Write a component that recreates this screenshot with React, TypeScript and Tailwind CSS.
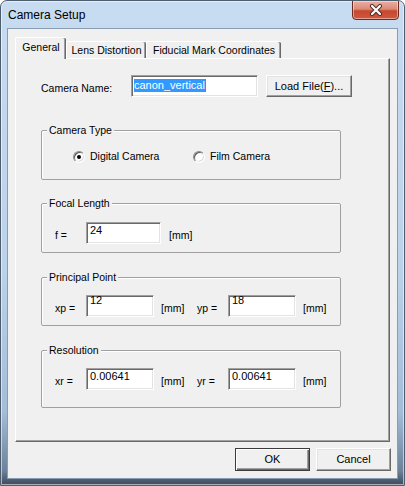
import { ReactNode } from "react";

const sans = "font-['Liberation_Sans',Arial,sans-serif]";

function Field({
  value,
  width,
  textTop = "pt-[1px] leading-[13px]",
}: {
  value: string;
  width: string;
  textTop?: string;
}) {
  return (
    <div
      className={`${width} h-[22px] bg-white border border-t-[#a0a0a0] border-l-[#a0a0a0] border-b-white border-r-white shadow-[inset_1px_1px_0_#696969,inset_-1px_-1px_0_#e3e3e3] pl-[2px] text-[11px] text-black ${textTop}`}
    >
      <div className="pl-[1px]">{value}</div>
    </div>
  );
}

function Label({ children, className = "" }: { children: ReactNode; className?: string }) {
  return <div className={`mt-[7px] text-[10.5px] leading-[13px] text-black ${className}`}>{children}</div>;
}

function Group({
  title,
  height,
  className = "",
  children,
}: {
  title: string;
  height: string;
  className?: string;
  children: ReactNode;
}) {
  return (
    <div
      className={`relative w-[300px] ${height} border border-[#a0a0a0] rounded-[2px] shadow-[inset_1px_1px_0_#ffffff] ${className}`}
    >
      <span className="absolute left-[5px] top-[-7px] bg-[#f0f0f0] px-[2px] text-[10.5px] leading-[13px] text-black">
        {title}
      </span>
      {children}
    </div>
  );
}

function Radio({ checked, label, className = "" }: { checked?: boolean; label: string; className?: string }) {
  return (
    <div className={`flex items-center ${className}`}>
      <div className="w-[12px] h-[12px] rounded-full border border-t-[#8a8a8a] border-l-[#8a8a8a] border-b-[#ffffff] border-r-[#ffffff] bg-white shadow-[inset_1px_1px_0_#5a5a5a,inset_-1px_-1px_0_#dcdcdc] flex items-center justify-center">
        {checked && <div className="w-[4px] h-[4px] rounded-full bg-black" />}
      </div>
      <span className="ml-[5px] text-[10.5px] leading-[13px] text-black">{label}</span>
    </div>
  );
}

function Button({ children, isDefault, className = "" }: { children: ReactNode; isDefault?: boolean; className?: string }) {
  const face = isDefault
    ? "border border-[#3c3c3c] shadow-[inset_1px_1px_0_#ffffff,inset_-1px_-1px_0_#696969,inset_-2px_-2px_0_#a0a0a0]"
    : "border border-t-white border-l-white border-b-[#696969] border-r-[#696969] shadow-[inset_-1px_-1px_0_#a0a0a0,inset_1px_1px_0_#e3e3e3]";
  return (
    <div
      className={`h-[23px] bg-[#f0f0f0] flex items-center justify-center text-[11px] leading-[13px] text-black ${face} ${className}`}
    >
      {children}
    </div>
  );
}

function Tab({ label, selected, className = "" }: { label: string; selected?: boolean; className?: string }) {
  return selected ? (
    <div
      className={`relative z-10 h-[22px] -mb-[1px] bg-[#f0f0f0] border-t border-l border-t-white border-l-white rounded-t-[2px] shadow-[inset_-1px_0_0_#696969,inset_-2px_0_0_#a0a0a0] pt-[3px] text-[10.5px] leading-[13px] text-black text-center ${className}`}
    >
      {label}
    </div>
  ) : (
    <div
      className={`h-[17px] bg-[#f0f0f0] border-t border-l border-t-white border-l-white rounded-t-[2px] shadow-[inset_-1px_0_0_#696969,inset_-2px_0_0_#a0a0a0] pt-[2px] text-[10.5px] leading-[13px] text-black text-center ${className}`}
    >
      {label}
    </div>
  );
}

export default function App() {
  return (
    <div
      className={`${sans} w-[405px] h-[486px] flex flex-col rounded-t-[7px] border border-[#4e5d6e] overflow-hidden bg-[linear-gradient(to_bottom,#c7dbf1_0%,#bcd2ea_55%,#a3bcd8_85%,#6d829b_97%,#3e4b5a_100%)] shadow-[inset_0_0_0_1px_rgba(255,255,255,0.55)]`}
    >
      {/* Title bar */}
      <div className="h-[27px] flex items-start justify-between">
        <div className="pt-[7px] pl-[7px] text-[12px] leading-[14px] text-black">Camera Setup</div>
        <div className="-mt-[1px] mr-[5px] w-[47px] h-[20px] rounded-b-[4px] border border-[#6b2b21] bg-[linear-gradient(to_bottom,#e9b0a2_0%,#dc8a76_45%,#c7472f_55%,#d0583c_100%)] shadow-[inset_0_0_0_1px_rgba(255,255,255,0.45)] flex items-center justify-center">
          <svg width="14" height="12" viewBox="0 0 14 12">
            <path d="M3 2 L11 10 M11 2 L3 10" stroke="#4a2a26" strokeWidth="4" strokeLinecap="round" />
            <path d="M3 2 L11 10 M11 2 L3 10" stroke="#ffffff" strokeWidth="2.2" strokeLinecap="round" />
          </svg>
        </div>
      </div>

      {/* Client area */}
      <div className="flex-1 ml-[6px] mr-[6px] mb-[6px] border border-[#8a9cb2] bg-[#f0f0f0] flex flex-col">
        {/* Tabs */}
        <div className="flex items-end pl-[7px] pt-[8px]">
          <Tab label="General" selected className="w-[51px]" />
          <Tab label="Lens Distortion" className="w-[80px]" />
          <Tab label="Fiducial Mark Coordinates" className="w-[135px]" />
        </div>

        {/* Panel */}
        <div className="mx-[7px] h-[384px] border border-t-white border-l-white border-b-[#696969] border-r-[#696969] shadow-[inset_-1px_-1px_0_#a0a0a0] pt-[16px] pl-[25px]">
          <div className="flex items-start">
            <Label className="w-[90px]">Camera Name:</Label>
            <div className="w-[127px] h-[22px] bg-white border border-t-[#a0a0a0] border-l-[#a0a0a0] border-b-white border-r-white shadow-[inset_1px_1px_0_#696969,inset_-1px_-1px_0_#e3e3e3] pl-[2px] pt-[3px] flex items-start">
              <span className="bg-[#3399ff] text-white text-[11px] leading-[13px]">canon_vertical</span>
              <span className="w-[1px] h-[13px] bg-[#cc6a1f]" />
            </div>
            <Button className="ml-[8px] w-[86px] !h-[22px]">
              <span>
                Load File(<span className="underline">F</span>)...
              </span>
            </Button>
          </div>

          <Group title="Camera Type" height="h-[50px]" className="mt-[33px]">
            <div className="flex pt-[19px] pl-[31px]">
              <Radio checked label="Digital Camera" className="w-[120px]" />
              <Radio label="Film Camera" />
            </div>
          </Group>

          <Group title="Focal Length" height="h-[50px]" className="mt-[23px]">
            <div className="flex items-start pt-[18px] pl-[13px]">
              <Label className="w-[31px]">f =</Label>
              <Field value="24" width="w-[75px]" />
              <Label className="ml-[8px]">[mm]</Label>
            </div>
          </Group>

          <Group title="Principal Point" height="h-[49px]" className="mt-[24px]">
            <div className="flex items-start pt-[17px] pl-[13px]">
              <Label className="w-[31px]">xp =</Label>
              <Field value="12" width="w-[68px]" textTop="pt-0 leading-[9px]" />
              <Label className="ml-[7px] w-[36px]">[mm]</Label>
              <Label className="w-[31px]">yp =</Label>
              <Field value="18" width="w-[68px]" textTop="pt-0 leading-[9px]" />
              <Label className="ml-[7px]">[mm]</Label>
            </div>
          </Group>

          <Group title="Resolution" height="h-[58px]" className="mt-[24px]">
            <div className="flex items-start pt-[17px] pl-[13px]">
              <Label className="w-[31px]">xr =</Label>
              <Field value="0.00641" width="w-[68px]" />
              <Label className="ml-[7px] w-[36px]">[mm]</Label>
              <Label className="w-[31px]">yr =</Label>
              <Field value="0.00641" width="w-[68px]" />
              <Label className="ml-[7px]">[mm]</Label>
            </div>
          </Group>
        </div>

        {/* Dialog buttons */}
        <div className="flex justify-end gap-[6px] mt-[6px] mr-[6px]">
          <Button isDefault className="w-[75px]">OK</Button>
          <Button className="w-[75px]">Cancel</Button>
        </div>
      </div>
    </div>
  );
}
